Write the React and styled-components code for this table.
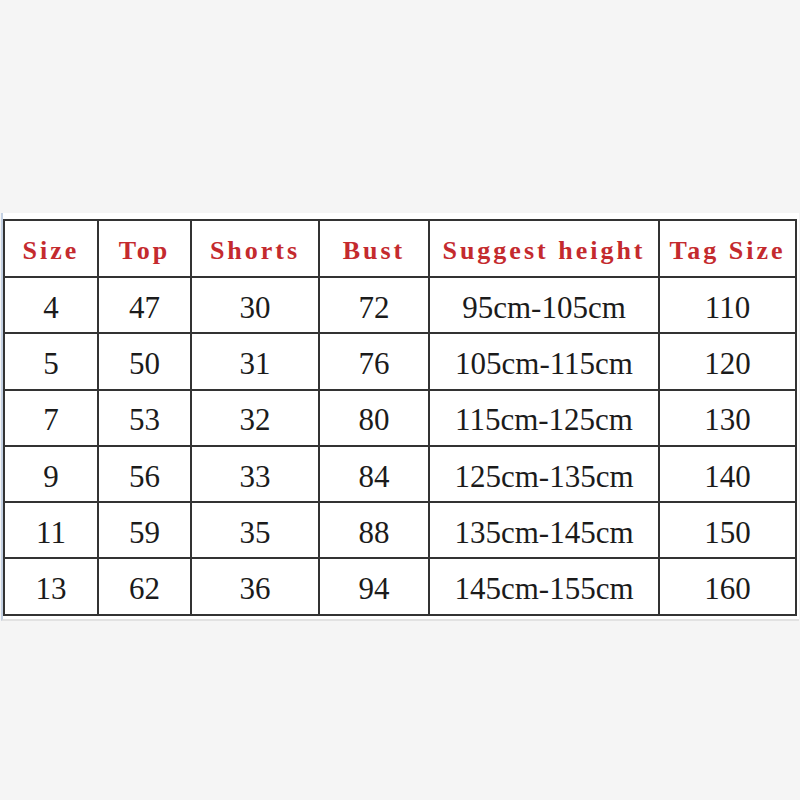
import React from 'react'
import styled, { createGlobalStyle } from 'styled-components'

const GlobalStyle = createGlobalStyle`
  html, body {
    margin: 0;
    padding: 0;
    background: #f5f5f5;
  }
`

const headers = ['Size', 'Top', 'Shorts', 'Bust', 'Suggest height', 'Tag Size']
const widths = [94, 93, 128, 110, 230, 137]

const rows = [
  ['4', '47', '30', '72', '95cm-105cm', '110'],
  ['5', '50', '31', '76', '105cm-115cm', '120'],
  ['7', '53', '32', '80', '115cm-125cm', '130'],
  ['9', '56', '33', '84', '125cm-135cm', '140'],
  ['11', '59', '35', '88', '135cm-145cm', '150'],
  ['13', '62', '36', '94', '145cm-155cm', '160'],
]

const Page = styled.div`
  width: 800px;
  height: 800px;
  padding-top: 213px;
  box-sizing: border-box;
`

const Sheet = styled.div`
  background: #fff;
  margin-left: 1px;
  width: 798px;
  padding: 6px 0 3px 0;
  border-left: 2px solid #c3d0e2;
  border-bottom: 2px solid #e2e2e2;
  box-sizing: border-box;
`

const Table = styled.table`
  border-collapse: collapse;
  table-layout: fixed;
  width: 794px;
  td, th {
    border: 2px solid #333;
    padding: 0;
    text-align: center;
    vertical-align: middle;
  }
`

const HeadCell = styled.th`
  height: 51px;
  padding-top: 4px !important;
  font-family: "Liberation Serif", serif;
  font-weight: bold;
  font-size: 26px;
  letter-spacing: 3px;
  color: #c42a2e;
  white-space: nowrap;
`

const Cell = styled.td`
  height: 49.3px;
  padding-top: 5px !important;
  font-family: "Liberation Serif", serif;
  font-size: 31px;
  color: #1b1b1b;
  white-space: nowrap;
`

export default function App() {
  return (
    <Page>
      <GlobalStyle />
      <Sheet>
        <Table>
          <colgroup>
            {widths.map((w, i) => (
              <col key={i} style={{ width: w }} />
            ))}
          </colgroup>
          <thead>
            <tr>
              {headers.map((h) => (
                <HeadCell key={h}>{h}</HeadCell>
              ))}
            </tr>
          </thead>
          <tbody>
            {rows.map((r, i) => (
              <tr key={i}>
                {r.map((c, j) => (
                  <Cell key={j}>{c}</Cell>
                ))}
              </tr>
            ))}
          </tbody>
        </Table>
      </Sheet>
    </Page>
  )
}
